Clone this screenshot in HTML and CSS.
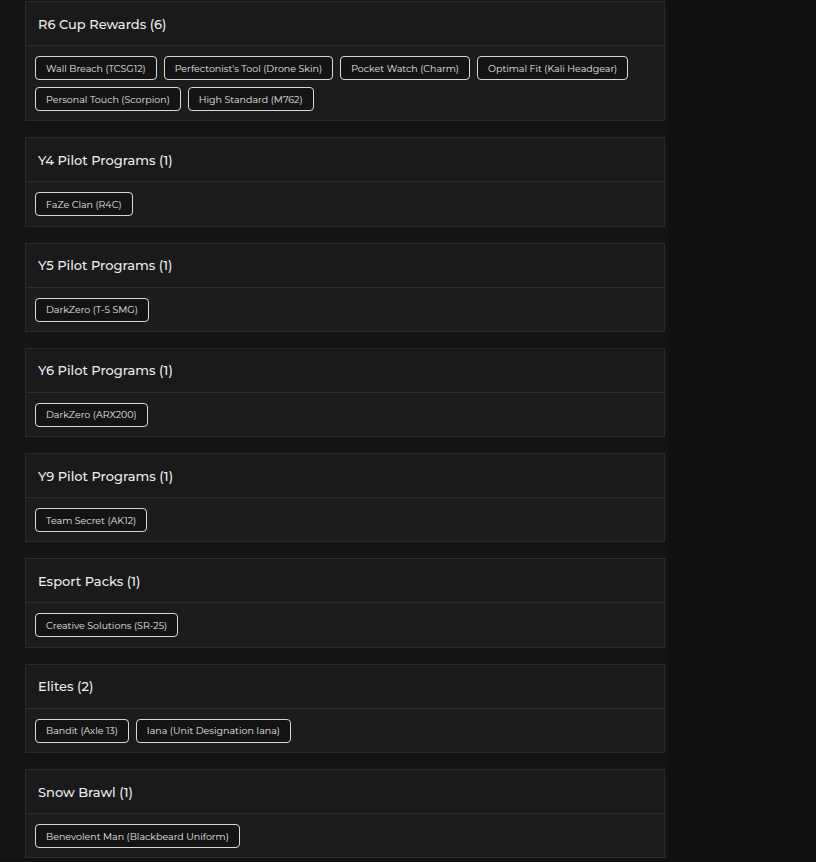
FILE: index.html
```html
<!DOCTYPE html>
<html lang="en">
<head>
  <meta charset="UTF-8">
  <meta name="viewport" content="width=device-width, initial-scale=1.0">
  <title>Rewards</title>
  <link rel="stylesheet" href="styles.css">
</head>
<body>
  <div class="rewards">

      <!-- R6 Cup -->
      <div class="group">
          <div class="group-head">R6 Cup Rewards (6)</div>
          <div class="group-body">
              <span class="chip">Wall Breach (TCSG12)</span>
              <span class="chip">Perfectonist's Tool (Drone Skin)</span>
              <span class="chip">Pocket Watch (Charm)</span>
              <span class="chip">Optimal Fit (Kali Headgear)</span>
              <span class="chip">Personal Touch (Scorpion)</span>
              <span class="chip">High Standard (M762)</span>
          </div>
      </div>

      <div class="group">
          <div class="group-head">Y4 Pilot Programs (1)</div>
          <div class="group-body">
              <span class="chip">FaZe Clan (R4C)</span>
          </div>
      </div>

      <div class="group">
          <div class="group-head">Y5 Pilot Programs (1)</div>
          <div class="group-body">
              <span class="chip">DarkZero (T-5 SMG)</span>
          </div>
      </div>

      <div class="group">
          <div class="group-head">Y6 Pilot Programs (1)</div>
          <div class="group-body">
              <span class="chip">DarkZero (ARX200)</span>
          </div>
      </div>

      <div class="group">
          <div class="group-head">Y9 Pilot Programs (1)</div>
          <div class="group-body">
              <span class="chip">Team Secret (AK12)</span>
          </div>
      </div>

      <div class="group">
          <div class="group-head">Esport Packs (1)</div>
          <div class="group-body">
              <span class="chip">Creative Solutions (SR-25)</span>
          </div>
      </div>

      <div class="group">
          <div class="group-head">Elites (2)</div>
          <div class="group-body">
              <span class="chip">Bandit (Axle 13)</span>
              <span class="chip">Iana (Unit Designation Iana)</span>
          </div>
      </div>

      <div class="group">
          <div class="group-head">Snow Brawl (1)</div>
          <div class="group-body">
              <span class="chip">Benevolent Man (Blackbeard Uniform)</span>
          </div>
      </div>

  </div>
</body>
</html>
```

FILE: styles.css
```css
body {
    margin: 0;
    background-color: #111111;
    font-family: Montserrat, "DejaVu Sans", sans-serif;
    color: #e6e6e6;
}
.rewards {
    width: 643px;
    padding: 1px 0 0 25px;
    background-color: #141414;
    display: flex;
    flex-direction: column;
    gap: 16px;
}
.group {
    width: 638px;
    border: 1px solid #2a2a2a;
    background-color: #1c1c1c;
}
.group-head {
    height: 43px;
    padding: 0 12px;
    display: flex;
    align-items: center;
    background-color: #1a1a1a;
    border-bottom: 1px solid #2d2d2d;
    font-size: 13px;
    font-weight: 500;
    color: #ececec;
}
.group-body {
    padding: 10px 9px 9.3px;
    display: flex;
    flex-wrap: wrap;
    gap: 7px 7px;
}
.chip {
    height: 22px;
    padding: 0 10px;
    display: flex;
    align-items: center;
    border: 1px solid #d8d8d8;
    border-radius: 4px;
    background-color: #141414;
    font-size: 9.5px;
    color: #e4e4e4;
}
```
